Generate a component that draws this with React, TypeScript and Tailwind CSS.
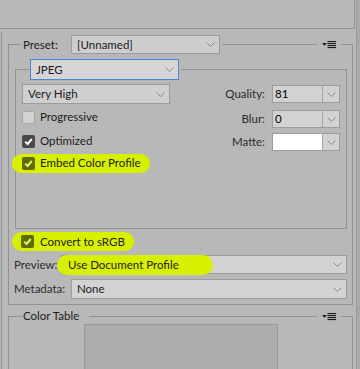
import React from "react";

const LINE = "#929292";

function Chevron() {
  return (
    <svg width="9" height="5" viewBox="0 0 9 5" className="shrink-0">
      <polyline points="0.5,0.5 4.5,4.5 8.5,0.5" fill="none" stroke="#8a8a8a" strokeWidth="1" />
    </svg>
  );
}

function MenuIcon() {
  return (
    <svg width="14" height="9" viewBox="0 0 14 9" className="shrink-0">
      <polygon points="0,3 5,3 2.5,5.8" fill="#1a1a1a" />
      <rect x="5.5" y="1" width="8.5" height="1.1" fill="#1a1a1a" />
      <rect x="5.5" y="3" width="8.5" height="1.1" fill="#1a1a1a" />
      <rect x="5.5" y="5" width="8.5" height="1.1" fill="#1a1a1a" />
      <rect x="5.5" y="7" width="8.5" height="1.1" fill="#1a1a1a" />
    </svg>
  );
}

function CheckBox({ checked, hl }: { checked?: boolean; hl?: boolean }) {
  if (!checked) {
    return <div className="w-[13px] h-[13px] shrink-0 rounded-[2px] bg-[#d2d2d2] border border-[#a8a8a8]" />;
  }
  return (
    <div
      className={
        "w-[13px] h-[13px] shrink-0 rounded-[2px] flex items-center justify-center " +
        (hl ? "bg-[#5e6c00]" : "bg-[#4a4a4a]")
      }
    >
      <svg width="11" height="11" viewBox="0 0 11 11">
        <polyline
          points="2.2,5.6 4.6,8 8.8,3"
          fill="none"
          stroke={hl ? "#e4f56a" : "#ffffff"}
          strokeWidth="2"
        />
      </svg>
    </div>
  );
}

function Select({
  text,
  className,
}: {
  text: string;
  className: string;
}) {
  return (
    <div className={"flex items-center justify-between pl-[5px] pr-[4px] " + className}>
      <span className="whitespace-nowrap">{text}</span>
      <Chevron />
    </div>
  );
}

function Combo({ value, white }: { value: string; white?: boolean }) {
  return (
    <div className="flex h-[18px] w-[68px] border border-[#9c9c9c] bg-[#d2d2d2]">
      <div className={"flex-1 flex items-center pl-[2px] " + (white ? "bg-white" : "")}>
        <span className="text-black">{value}</span>
      </div>
      <div className="w-px bg-[#a6a6a6]" />
      <div className="w-[16px] flex items-center justify-center">
        <Chevron />
      </div>
    </div>
  );
}

export default function App() {
  return (
    <div
      className="w-[360px] h-[369px] overflow-hidden bg-[#b8b8b8] flex items-start text-[11.5px] text-[#1c1c1c] leading-[14px]"
      style={{ fontFamily: "Lato, 'Liberation Sans', sans-serif" }}
    >
      <div className="w-[356px] shrink-0 flex flex-col">
        <div className="h-[29px] shrink-0 w-[355px] border-b border-r" style={{ borderColor: LINE }} />
        <div className="mt-[3px] shrink-0 ml-px border-l pt-[3px] pl-[6px] h-[400px]" style={{ borderColor: LINE }}>
          {/* Outer fieldset */}
          <fieldset className="w-[345px] border pb-[5px]" style={{ borderColor: LINE }}>
            <legend className="ml-[13px] w-[330px] p-0 flex items-center h-[19px]">
              <span className="w-[49px] pl-[1px] text-[#1c1c1c]">Preset:</span>
              <Select
                text="[Unnamed]"
                className="w-[149px] h-[19px] border border-[#9c9c9c] bg-[#cdcdcd]"
              />
              <div className="flex-1 h-px ml-[2px]" style={{ background: LINE }} />
              <div className="mx-[5px]">
                <MenuIcon />
              </div>
              <div className="w-[11px] h-px" style={{ background: LINE }} />
            </legend>

            {/* Inner fieldset */}
            <fieldset className="mt-[5px] ml-[6px] w-[332px] border pb-[54px]" style={{ borderColor: LINE }}>
              <legend className="ml-[14px] w-[316px] p-0 flex items-center h-[21px]">
                <Select
                  text="JPEG"
                  className="w-[149px] h-[21px] border border-[#4a86d6] bg-[#d6d6d6]"
                />
                <div className="flex-1 h-px ml-[2px]" style={{ background: LINE }} />
              </legend>
              <div className="pt-[4px] pl-[6px] pr-[6px] flex">
                <div className="w-[148px] flex flex-col">
                  <Select
                    text="Very High"
                    className="w-[148px] h-[20px] border border-[#9c9c9c] bg-[#cfcfcf]"
                  />
                  <div className="h-[26px] flex items-center gap-[5px]">
                    <CheckBox />
                    <span>Progressive</span>
                  </div>
                  <div className="h-[22px] flex items-center gap-[5px]">
                    <CheckBox checked />
                    <span>Optimized</span>
                  </div>
                  <div className="h-[22px] flex items-center">
                    <div className="-ml-[10px] h-[19px] pl-[10px] pr-[9px] rounded-full bg-[#d8f000] flex items-center gap-[5px] whitespace-nowrap">
                      <CheckBox checked hl />
                      <span>Embed Color Profile</span>
                    </div>
                  </div>
                </div>
                <div className="flex-1 flex flex-col items-end">
                  <div className="mt-[1px] flex items-center gap-[7px]">
                    <span className="text-[#2c2c2c]">Quality:</span>
                    <Combo value="81" />
                  </div>
                  <div className="mt-[7px] flex items-center gap-[7px]">
                    <span className="text-[#2c2c2c]">Blur:</span>
                    <Combo value="0" />
                  </div>
                  <div className="mt-[5px] flex items-center gap-[7px]">
                    <span className="text-[#2c2c2c]">Matte:</span>
                    <Combo value="" white />
                  </div>
                </div>
              </div>
            </fieldset>

            {/* Convert to sRGB */}
            <div className="mt-[3px] ml-[3px] h-[19px] flex">
              <div className="h-[19px] pl-[9px] pr-[9px] rounded-full bg-[#d8f000] flex items-center gap-[6px]">
                <CheckBox checked hl />
                <span>Convert to sRGB</span>
              </div>
            </div>

            {/* Preview */}
            <div className="mt-[4px] h-[19px] flex items-center pl-[5px] pr-[5px]">
              <span className="w-[47px] text-[#2c2c2c]">Preview:</span>
              <div className="flex-1 h-[19px] border border-[#9c9c9c] bg-[#d3d3d3] flex items-center justify-between pr-[4px]">
                <span className="-ml-[5px] -my-[1px] h-[20px] pl-[11px] pr-[10px] w-[156px] rounded-full bg-[#d8f000] flex items-center whitespace-nowrap">
                  Use Document Profile
                </span>
                <Chevron />
              </div>
            </div>

            {/* Metadata */}
            <div className="mt-[5px] h-[20px] flex items-center pl-[5px] pr-[5px]">
              <span className="w-[57px] text-[#2c2c2c]">Metadata:</span>
              <Select
                text="None"
                className="flex-1 h-[20px] border border-[#9c9c9c] bg-[#d3d3d3]"
              />
            </div>
          </fieldset>

          {/* Color Table fieldset */}
          <fieldset className="mt-[4px] w-[345px] border h-[80px]" style={{ borderColor: LINE }}>
            <legend className="ml-[13px] w-[330px] p-0 flex items-center h-[14px]">
              <span className="pl-[1px] whitespace-nowrap">Color Table</span>
              <div className="flex-1 h-px ml-[10px]" style={{ background: LINE }} />
              <div className="mx-[5px]">
                <MenuIcon />
              </div>
              <div className="w-[11px] h-px" style={{ background: LINE }} />
            </legend>
            <div className="mt-px ml-[75px] w-[194px] h-[60px] border border-[#9a9a9a] bg-[#adadad]" />
          </fieldset>
        </div>
      </div>
      <div className="w-px h-[369px] bg-[#9a9a9a]" />
      <div className="flex-1 h-[369px] bg-[#a9a9a9]" />
    </div>
  );
}
